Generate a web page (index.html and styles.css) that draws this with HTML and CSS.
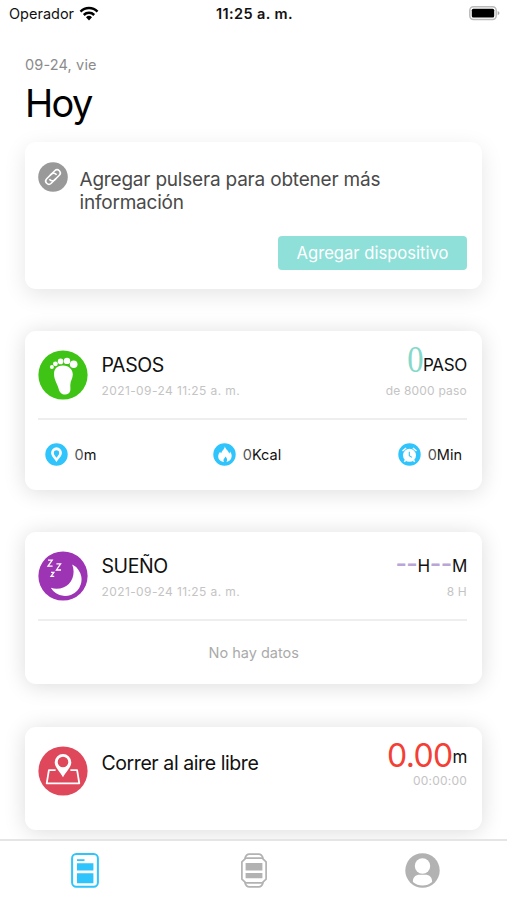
FILE: index.html
```html
<!DOCTYPE html>
<html lang="es">
<head>
    <meta charset="UTF-8">
    <title>Hoy</title>
    <link rel="stylesheet" href="styles.css">
</head>
<body>
<div class="app">
    <div class="status-bar">
        <div class="carrier">
            <span>Operador</span>
            <svg width="20" height="15" viewBox="0 0 20 15" fill="none" stroke="#000" stroke-width="2.5">
                <path d="M1.5 5.6a12 12 0 0 1 17 0"/>
                <path d="M4.8 9a7.4 7.4 0 0 1 10.4 0"/>
                <path d="M10 14.4l-3-3.1a4.3 4.3 0 0 1 6 0z" fill="#000" stroke="none"/>
            </svg>
        </div>
        <div class="time">11:25 a. m.</div>
        <div class="battery">
            <svg width="31" height="15" viewBox="0 0 31 15">
                <rect x=".8" y=".8" width="26.4" height="12.6" rx="3.6" fill="#fff" stroke="#bbb" stroke-width="1.5"/>
                <rect x="2.8" y="2.7" width="22.4" height="8.8" rx="1.5" fill="#000"/>
                <path d="M28.7 4.9q1.8.7 1.8 2.2t-1.8 2.2z" fill="#aaa"/>
            </svg>
        </div>
    </div>

    <div class="header">
        <div class="date">09-24, vie</div>
        <h1>Hoy</h1>
    </div>

    <div class="card card-bind">
        <div class="bind-info">
            <svg class="link-icon" width="30" height="30" viewBox="0 0 30 30">
                <circle cx="15" cy="15" r="14.8" fill="#999"/>
                <g fill="none" stroke="#fff" stroke-width="1.6" transform="rotate(-45 15 15)">
                    <path d="M16 18.200H9.300a3.200 3.200 0 0 1 0-6.400H16a3.200 3.200 0 0 1 3 4.200"/>
                    <path d="M14 11.800h6.700a3.200 3.200 0 0 1 0 6.400H14a3.200 3.200 0 0 1-3-4.200"/>
                </g>
            </svg>
            <p>Agregar pulsera para obtener más información</p>
        </div>
        <button class="btn-add">Agregar dispositivo</button>
    </div>

    <div class="card card-steps">
        <div class="card-top">
            <svg class="card-icon" width="50" height="50" viewBox="0 0 50 50">
                <circle cx="25" cy="25" r="24.6" fill="#3fc415"/>
                <g fill="#fff">
                    <circle cx="13.9" cy="17.1" r="2"/>
                    <circle cx="17.4" cy="13.8" r="2.4"/>
                    <circle cx="22.6" cy="11.4" r="2.8"/>
                    <circle cx="29" cy="10.9" r="3.2"/>
                    <circle cx="35.7" cy="14.3" r="3.8"/>
                    <path d="M16 24c0-6 4-8.700 9-8.600 6 0 9.800 4 9.800 9.200 0 3.800-2.500 6.400-2.500 10.400 0 2.400.3 3.500 0 5.600-.4 2.600-2.600 4-5.100 4-3.600 0-5.600-2.200-6.500-5.600C19.600 34 16 30 16 24z"/>
                </g>
            </svg>
            <div class="card-title">
                <h2>PASOS</h2>
                <span>2021-09-24 11:25 a. m.</span>
            </div>
            <div class="card-value">
                <div class="value"><b class="num-steps">0</b>PASO</div>
                <span>de 8000 paso</span>
            </div>
        </div>
        <div class="stats">
            <div class="stat">
                <svg width="23" height="23" viewBox="0 0 23 23">
                    <circle cx="11.500" cy="11.500" r="11.200" fill="#2fc4fb"/>
                    <path fill="#fff" fill-rule="evenodd" d="M11.500 4.300a5.400 5.400 0 0 0-5.400 5.400c0 3.600 3.600 6.300 5.400 9.300 1.800-3 5.400-5.700 5.400-9.300a5.400 5.400 0 0 0-5.400-5.400zm0 3a2.700 2.700 0 0 1 2.700 2.700c0 1.700-1.400 3-2.700 4.700-1.300-1.700-2.700-3-2.700-4.700a2.700 2.700 0 0 1 2.700-2.700z"/>
                </svg>
                <span><i>0</i>m</span>
            </div>
            <div class="stat">
                <svg width="23" height="23" viewBox="0 0 23 23">
                    <circle cx="11.500" cy="11.500" r="11.200" fill="#2fc4fb"/>
                    <path fill="#fff" d="M11.800 3.200c.5 3 4 4.500 4.300 7.300.7-.4.9-1.200.9-2 1.200 1.600 1.900 3.200 1.600 5.200-.3 2.700-2.400 4.700-5.100 5.300 1.200-1.700.7-3.800-1.200-5.400-.2 1.300-1 1.600-1.600 2.700-.4 1-.2 1.900.4 2.700-3-.3-5.600-2.200-5.900-5-.2-2.300.9-3.900 2-5.300.2.800.4 1.300 1.100 1.600C8.600 7.600 11.700 6.500 11.800 3.200z"/>
                </svg>
                <span><i>0</i>Kcal</span>
            </div>
            <div class="stat">
                <svg width="23" height="23" viewBox="0 0 23 23">
                    <circle cx="11.500" cy="11.500" r="11.200" fill="#2fc4fb"/>
                    <circle cx="11.500" cy="12.300" r="6.500" fill="#fff"/>
                    <path d="M4.500 8l3.600-3M18.500 8l-3.600-3M7.600 17.200l-1.300 1.600M15.400 17.200l1.300 1.600" fill="none" stroke="#fff" stroke-width="1.500"/>
                    <path d="M11.300 8.800v4l2.700 1.600" fill="none" stroke="#2fc4fb" stroke-width="1.100"/>
                </svg>
                <span><i>0</i>Min</span>
            </div>
        </div>
    </div>

    <div class="card card-sleep">
        <div class="card-top">
            <svg class="card-icon" width="50" height="50" viewBox="0 0 50 50">
                <circle cx="25" cy="25" r="24.600" fill="#9c34b4"/>
                <path fill="#fff" d="M34.200 13.600a16.500 16.500 0 1 1-21.400 23.200c6.400 2 13.500.6 18-3.900 5-5 6-12.700 3.400-19.300z"/>
                <g fill="none" stroke="#fff" stroke-width="1.300">
                    <path d="M10 9.200h4.200l-4.200 6h4.600"/>
                    <path d="M18.400 12.800h4.200l-4.200 6.200h4.600"/>
                    <path d="M13 21.300h2.900l-2.900 4.100h3.200"/>
                </g>
            </svg>
            <div class="card-title">
                <h2>SUEÑO</h2>
                <span>2021-09-24 11:25 a. m.</span>
            </div>
            <div class="card-value">
                <div class="value"><b class="num-sleep">--</b>H<b class="num-sleep">--</b>M</div>
                <span>8 H</span>
            </div>
        </div>
        <div class="empty">No hay datos</div>
    </div>

    <div class="card card-run">
        <div class="card-top">
            <svg class="card-icon" width="50" height="50" viewBox="0 0 50 50">
                <circle cx="25" cy="25" r="24.600" fill="#df475b"/>
                <path d="M17.600 24.200h-6.700L8.700 37.300h32.600l-2.200-13.100h-6.700" fill="none" stroke="#fff" stroke-width="1.800" stroke-linejoin="round"/>
                <path fill="#fff" fill-rule="evenodd" d="M25 8a8.300 8.300 0 0 0-8.300 8.300c0 5.200 5.300 9.400 8.300 14.900 3-5.500 8.300-9.700 8.300-14.900A8.300 8.300 0 0 0 25 8zm0 2.700a5.300 5.300 0 1 1 0 10.600 5.300 5.300 0 0 1 0-10.600z"/>
            </svg>
            <div class="card-title">
                <h2>Correr al aire libre</h2>
            </div>
            <div class="card-value">
                <div class="value"><b class="num-run">0.00</b>m</div>
                <span>00:00:00</span>
            </div>
        </div>
    </div>

    <div class="tab-bar">
        <div class="tab">
            <svg width="28" height="35" viewBox="0 0 28 35">
                <rect x="1.100" y="1.100" width="25.800" height="32.600" rx="4.200" fill="none" stroke="#2fc4fb" stroke-width="2"/>
                <path fill="#2fc4fb" d="M6 6.200h7.500v1.900H6zM6 10.200h16.400v7.200H6zM6 20.200h16.400v10H6z"/>
            </svg>
        </div>
        <div class="tab">
            <svg width="28" height="35" viewBox="0 0 28 35">
                <g fill="none" stroke="#b2b2b2" stroke-width="1.700">
                    <path d="M5.800 5.200h16.400l3.900 3.600v17.400l-3.900 3.600H5.800l-3.900-3.600V8.800z" stroke-linejoin="round"/>
                    <path d="M4.800 5.800C5.600 2.700 7 1.200 9.400 1.200h9.200c2.400 0 3.800 1.500 4.600 4.600M4.800 29.200c.8 3.100 2.200 4.600 4.600 4.600h9.200c2.400 0 3.800-1.500 4.600-4.600"/>
                </g>
                <path fill="#b2b2b2" d="M5.600 10h16.800v7.400H5.600zM5.600 19.900h16.800v5.400H5.600z"/>
            </svg>
        </div>
        <div class="tab">
            <svg width="35" height="35" viewBox="0 0 35 35">
                <circle cx="17.500" cy="17.500" r="17.200" fill="#b2b2b2"/>
                <circle cx="17.500" cy="13" r="7.700" fill="#fff"/>
                <path fill="#fff" d="M7.900 29c-.3-4.700 2.500-7.300 7-7.300h5.200c4.500 0 7.300 2.600 7 7.300-5.200 4.600-13.700 4.800-19.200 0z"/>
            </svg>
        </div>
    </div>
</div>
</body>
</html>
```
FILE: styles.css
```css
* {
    margin: 0;
    padding: 0;
    box-sizing: border-box;
}
body {
    font-family: Inter, "Liberation Sans", sans-serif;
    color: #111;
    background: #fff;
}
svg {
    display: block;
    flex: none;
}
.app {
    display: flex;
    flex-direction: column;
    width: 507px;
    height: 900px;
    overflow: hidden;
}

/* status bar */
.status-bar {
    display: grid;
    grid-template-columns: 1fr auto 1fr;
    align-items: center;
    height: 27px;
    padding: 0 7px 0 9px;
    font-size: 14.5px;
}
.carrier {
    display: flex;
    align-items: center;
    gap: 5px;
}
.time {
    font-weight: 600;
    letter-spacing: .4px;
}
.battery {
    justify-self: end;
}

/* header */
.header {
    height: 115px;
    padding: 29px 25px 0;
}
.date {
    font-size: 14.5px;
    line-height: 18px;
    letter-spacing: .15px;
    color: #8b8b8b;
}
h1 {
    font-size: 38px;
    font-weight: 400;
    line-height: 46px;
    letter-spacing: -1.7px;
    margin-top: 6px;
    color: #000;
}

/* cards */
.card {
    flex: none;
    margin: 0 25px 42px;
    padding: 0 15px 0 12.5px;
    border-radius: 11px;
    background: #fff;
    box-shadow: 0 2px 22px rgba(0, 0, 0, .14);
}
.card-bind {
    height: 147px;
    padding-top: 20px;
    box-shadow: 0 6px 22px rgba(0, 0, 0, .1);
}
.card-steps {
    height: 159px;
}
.card-sleep {
    height: 152px;
    margin-bottom: 43px;
}
.card-run {
    height: 103px;
}
.bind-info {
    display: flex;
    gap: 12px;
    height: 74px;
}
.bind-info p {
    width: 330px;
    padding-top: 6px;
    font-size: 19px;
    line-height: 23px;
    letter-spacing: -.2px;
    color: #4a4a4a;
}
.btn-add {
    display: block;
    width: 189px;
    height: 34px;
    margin-left: auto;
    border: none;
    border-radius: 4px;
    font: 16.6px/34px Inter, "Liberation Sans", sans-serif;
    color: #fff;
    background: #8fe0d9;
}
.card-top {
    display: flex;
    height: 89px;
    padding-top: 19px;
    border-bottom: 2px solid #eee;
}
.card-run .card-top {
    border-bottom: none;
}
.card-title {
    flex: 1;
    padding: 3px 0 0 14px;
}
.card-title h2 {
    font-size: 19.5px;
    font-weight: 400;
    line-height: 24px;
    letter-spacing: -.42px;
}
.card-run .card-title {
    padding-top: 5px;
}
.card-title span,
.card-value span {
    display: block;
    font-size: 12px;
    line-height: 16px;
    letter-spacing: .4px;
    color: #c4c4c4;
}
.card-title span {
    margin-top: 6px;
}
.card-value {
    text-align: right;
}
.card-value span {
    letter-spacing: .2px;
}
.card-value .value {
    height: 33px;
    font-size: 17px;
    line-height: 31px;
    letter-spacing: -.3px;
}
.card-run .card-value .value {
    height: 27px;
    line-height: 23px;
}
.value b {
    font-weight: 400;
    line-height: 0;
}
.num-steps {
    display: inline-block;
    font-family: "Liberation Serif", serif;
    font-size: 37px;
    color: #84d9cb;
    vertical-align: -1px;
    transform: scaleX(.88);
    transform-origin: right;
}
.num-sleep {
    font-family: "Liberation Sans", sans-serif;
    font-size: 33px;
    letter-spacing: 0;
    vertical-align: -2px;
    color: #b9a5d6;
}
.num-run {
    font-size: 32px;
    letter-spacing: -.7px;
    vertical-align: -4px;
    color: #f33f35;
}
.stats {
    display: flex;
    justify-content: space-between;
    align-items: center;
    height: 68px;
    padding: 0 5px 0 7px;
}
.stat {
    display: flex;
    align-items: center;
    gap: 7px;
    font-size: 14.5px;
}
.stat i {
    font-style: normal;
    color: #555;
}
.empty {
    padding-left: 3px;
    line-height: 64px;
    font-size: 14.5px;
    text-align: center;
    color: #aaa;
}

/* bottom tabs */
.tab-bar {
    position: fixed;
    left: 0;
    bottom: 0;
    display: grid;
    grid-template-columns: repeat(3, 1fr);
    justify-items: center;
    width: 507px;
    height: 61px;
    padding-top: 12px;
    border-top: 2px solid #e5e5e5;
    background: #fff;
}
```
